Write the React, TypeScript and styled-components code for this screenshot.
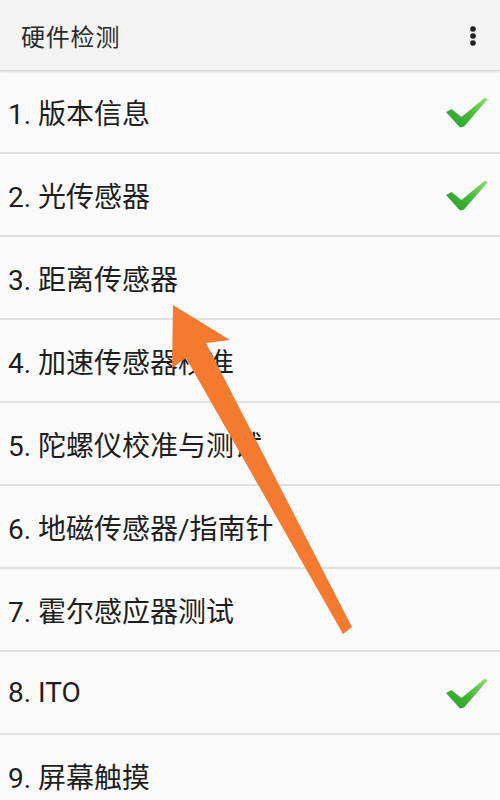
import React from "react";
import styled, { createGlobalStyle } from "styled-components";

const GlobalStyle = createGlobalStyle`
    html, body {
        margin: 0;
        padding: 0;
        background: #fafafa;
    }
    body {
        font-family: Roboto, "Noto Sans CJK SC", sans-serif;
    }
`;

interface Item {
    label: string;
    done: boolean;
}

const items: Item[] = [
    { label: "1. 版本信息", done: true },
    { label: "2. 光传感器", done: true },
    { label: "3. 距离传感器", done: false },
    { label: "4. 加速传感器校准", done: false },
    { label: "5. 陀螺仪校准与测试", done: false },
    { label: "6. 地磁传感器/指南针", done: false },
    { label: "7. 霍尔感应器测试", done: false },
    { label: "8. ITO", done: true },
    { label: "9. 屏幕触摸", done: false },
];

const CheckMark = () => (
    <svg width="42" height="32" viewBox="0 0 42 32">
        <defs>
            <linearGradient id="tick" x1="0" y1="1" x2="1" y2="0">
                <stop offset="0" stopColor="#2c9a2a" />
                <stop offset="0.45" stopColor="#3fb536" />
                <stop offset="1" stopColor="#94de70" />
            </linearGradient>
        </defs>
        <path
            d="M0 15 L5.5 12 L15.5 20 L39 0.5 L41.5 2.5 L18 29.5 L14 30.5 Z"
            fill="url(#tick)"
        />
    </svg>
);

const MoreIcon = () => (
    <svg width="10" height="24" viewBox="0 0 10 24">
        <circle cx="5" cy="5" r="2.8" fill="#222" />
        <circle cx="5" cy="12" r="2.8" fill="#222" />
        <circle cx="5" cy="19" r="2.8" fill="#222" />
    </svg>
);

const Arrow = () => (
    <ArrowLayer width="500" height="800" viewBox="0 0 500 800">
        <polygon
            points="173,305 230,340 206,343 352,627 343,634 186,358 172,368"
            fill="#f47a30"
        />
    </ArrowLayer>
);

const App = () => {
    return (
        <Page>
            <GlobalStyle />
            <Header>
                <Title>硬件检测</Title>
                <MoreButton>
                    <MoreIcon />
                </MoreButton>
            </Header>
            <List>
                {items.map((item, index) => (
                    <Row key={index}>
                        <RowLabel>{item.label}</RowLabel>
                        {item.done && (
                            <Tick>
                                <CheckMark />
                            </Tick>
                        )}
                    </Row>
                ))}
            </List>
            <Arrow />
        </Page>
    );
};

const Page = styled.div`
    position: relative;
    width: 500px;
    height: 800px;
    overflow: hidden;
    background: #fafafa;
`;

const Header = styled.div`
    position: relative;
    z-index: 1;
    display: flex;
    align-items: center;
    justify-content: space-between;
    height: 71px;
    padding: 0 22px 0 21px;
    box-sizing: border-box;
    background: #f3f3f3;
    border-bottom: 1px solid #d6d6d6;
    box-shadow: 0 1px 2px rgba(0, 0, 0, 0.12);
`;

const Title = styled.span`
    font-size: 24px;
    color: #2a2a2a;
    letter-spacing: 0.8px;
`;

const MoreButton = styled.div`
    display: flex;
    align-items: center;
    justify-content: center;
    margin-top: 1px;
`;

const List = styled.div`
    display: flex;
    flex-direction: column;
`;

const Row = styled.div`
    display: flex;
    align-items: center;
    justify-content: space-between;
    height: 81px;
    padding: 0 12px 0 8px;
    border-bottom: 2px solid #e0e0e0;
    box-sizing: content-box;
`;

const RowLabel = styled.span`
    font-size: 28px;
    color: #1e1e1e;
`;

const Tick = styled.div`
    display: flex;
    margin-top: 2px;
`;

const ArrowLayer = styled.svg`
    position: absolute;
    left: 0;
    top: 0;
    pointer-events: none;
    z-index: 2;
`;

export default App;
